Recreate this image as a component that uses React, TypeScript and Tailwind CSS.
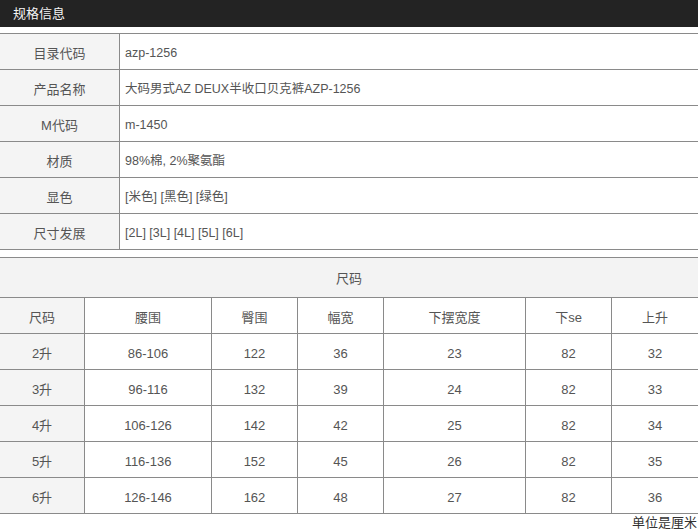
import React from "react";

const font = { fontFamily: '"Liberation Sans", "Noto Sans CJK SC", sans-serif' };

const info: [string, string][] = [
  ["目录代码", "azp-1256"],
  ["产品名称", "大码男式AZ DEUX半收口贝克裤AZP-1256"],
  ["M代码", "m-1450"],
  ["材质", "98%棉, 2%聚氨酯"],
  ["显色", "[米色] [黑色] [绿色]"],
  ["尺寸发展", "[2L] [3L] [4L] [5L] [6L]"],
];

const heads = ["尺码", "腰围", "臀围", "幅宽", "下摆宽度", "下se", "上升"];
const rows = [
  ["2升", "86-106", "122", "36", "23", "82", "32"],
  ["3升", "96-116", "132", "39", "24", "82", "33"],
  ["4升", "106-126", "142", "42", "25", "82", "34"],
  ["5升", "116-136", "152", "45", "26", "82", "35"],
  ["6升", "126-146", "162", "48", "27", "82", "36"],
];

export default function App() {
  return (
    <div className="w-[698px] h-[532px] bg-white text-[13px] text-[#555] overflow-hidden" style={font}>
      <div className="h-[27px] bg-[#232323] text-[#f4f4f4] flex items-center pl-[13px] text-[13px] font-normal">规格信息</div>
      <div className="mt-[6px] border-t border-[#8a8a8a]">
        {info.map(([k, v]) => (
          <div key={k} className="flex h-[36px] border-b border-[#8a8a8a]">
            <div className="w-[120px] shrink-0 bg-[#f4f4f4] border-r border-[#8a8a8a] flex items-center justify-center pt-[4px]">{k}</div>
            <div className="flex-1 flex items-center pl-[5px] pt-[4px] text-[12.5px]">{v}</div>
          </div>
        ))}
      </div>
      <div className="mt-[7px] border-t border-[#8a8a8a]">
        <div className="h-[40px] bg-[#f3f3f3] border-b border-[#8a8a8a] flex items-center justify-center pt-[2px]">尺码</div>
        {[heads, ...rows].map((r, i) => (
          <div key={i} className="grid grid-cols-[85px_127px_86px_86px_142px_86px_1fr] h-[36px] border-b border-[#8a8a8a]">
            {r.map((c, j) => (
              <div
                key={j}
                className={
                  "flex items-center justify-center pt-[4px] " +
                  (j < 6 ? "border-r border-[#8a8a8a] " : "") +
                  (j === 0 ? "bg-[#f4f4f4]" : "")
                }
              >
                {c}
              </div>
            ))}
          </div>
        ))}
        <div className="flex justify-end pr-[1px] text-[13px] text-[#333] leading-[18px]">单位是厘米</div>
      </div>
    </div>
  );
}
